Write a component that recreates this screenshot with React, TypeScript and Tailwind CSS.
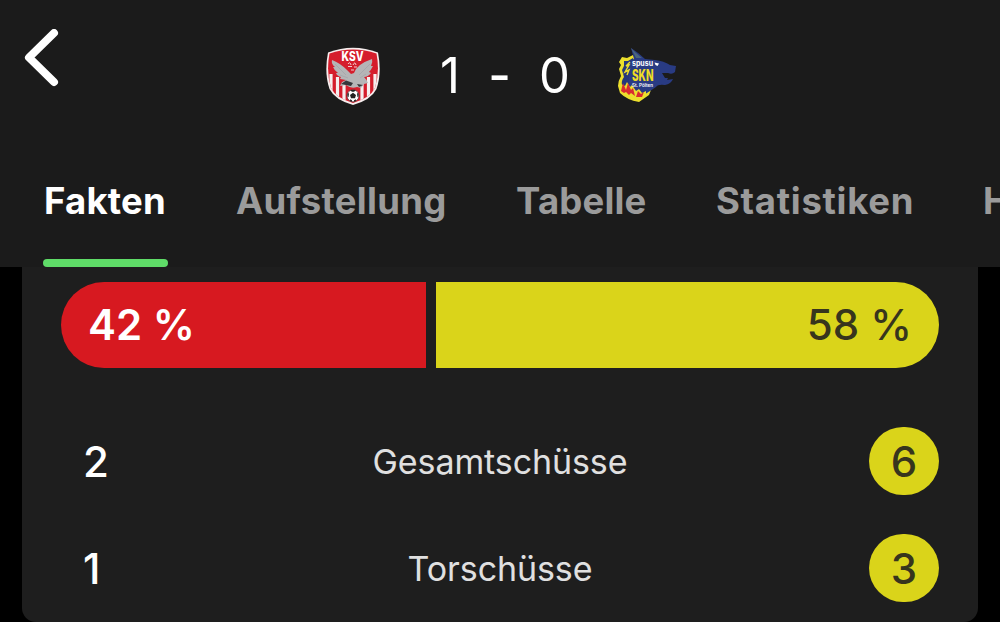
import clsx from 'clsx';

const tabs = [
  { label: 'Fakten', className: 'w-[125px] text-white tracking-[0.2px]', active: true },
  { label: 'Aufstellung', className: 'w-[213px] text-[#9b9b9b] tracking-[0.3px]' },
  { label: 'Tabelle', className: 'w-[133px] text-[#9b9b9b] tracking-[0.2px]' },
  { label: 'Statistiken', className: 'w-[200px] text-[#9b9b9b] tracking-[0.7px]' },
  { label: 'H2H', className: 'w-[80px] text-[#9b9b9b]' },
];

const stats = [
  { label: 'Gesamtschüsse', home: 2, away: 6 },
  { label: 'Torschüsse', home: 1, away: 3 },
];

const HomeCrest = () => (
  <svg width="54" height="58" viewBox="0 0 54 58" className="shrink-0">
    <defs>
      <clipPath id="home-shield">
        <path d="M3.500 6.500Q27-1.500 50.500 6.500Q54 25 49 41Q44 51 27 56Q10 51 5 41Q0 25 3.500 6.500Z" />
      </clipPath>
    </defs>
    <path d="M2 5.500Q27-4 52 5.500Q56 26 50.500 42Q45 53 27 58Q9 53 3.500 42Q-2 26 2 5.500Z" fill="#f7eeee" />
    <g clipPath="url(#home-shield)">
      <rect width="54" height="58" fill="#d51d2c" />
      <path d="M5 27V50M11.500 30V54M18 36V58M36 36V58M42.500 30V54M49 27V50" stroke="#f5eeee" strokeWidth="3.2" />
    </g>
    <path
      d="M6 13Q14 16 21 23L25 27L28 26Q31 17 46 12Q47 15 45 19L47 19Q45 23 43 25L45 26Q42 30 38 30Q41 33 42 36L38 37L35 41L31 40Q25 42 20 38L14 39L16 35L20 33L14 32L15 30Q11 29 10 26L12 26Q8 23 7 20L9 20Q5 17 6 13Z"
      fill="#b5b5b7"
    />
    <path d="M9 17L20 28M14 28L22 31M44 17L33 28M40 27L34 31" stroke="#a0a0a4" strokeWidth="0.6" />
    <path d="M15 37L20 33.500L27 36L25 39L20 38ZM31 37L37 38L33 40Z" fill="#36363b" />
    <path d="M22 17Q24 14 25 18M27 18Q29 14 30 18M22 19.500H26M28 20H31M25 23H28" stroke="#f5dfe1" strokeWidth="0.9" fill="none" />
    <text x="26.5" y="13.7" textAnchor="middle" textLength="22" lengthAdjust="spacingAndGlyphs" fontSize="12.5" fontWeight="800" fill="#fff">
      KSV
    </text>
    <circle cx="27" cy="48.8" r="6" fill="#fff" stroke="#35252a" strokeWidth="0.6" />
    <path
      d="M27 45.800L30 48L29 51.300H25L24 48ZM24 43.300L27 42.800L30 43.300L28 44.800H26ZM21.500 46.300L23 46.300L22.500 50.300L21.300 49.300ZM32.500 46.300L31 46.300L31.500 50.300L32.700 49.300ZM24 52.300L26 53.300V54.700L24 53.800ZM30 52.300L28 53.300V54.700L30 53.800Z"
      fill="#222"
    />
  </svg>
);

const AwayCrest = () => (
  <svg width="60" height="58" viewBox="0 0 60 58" className="shrink-0">
    {/* shield */}
    <path d="M5 10L10 11L16 8L19 10L17 20V49L34 43L32 48L22 55Q10 53 3 46L1 39Q1 34 4 29L2 22L4 18L2 15Z" fill="#ecdf2d" />
    <path d="M7 14L11 14L16 11L18 20L18 45L5 38Q4 34 7 30L5 23L7 19Z" fill="#25377b" />
    {/* wolf head */}
    <path
      d="M14 1Q22 6 28 12L38 13Q47 14 53 18L59 19L58 25Q55 28 51 26L45 26L48 31L51 31L50 33L56 32Q54 37 48 38Q41 37 39 40L33 44L22 51L12 45V14L17 12Z"
      fill="#293b83"
    />
    <path d="M14 1L19 6L25 11L19 11Z" fill="#4b657c" />
    <path d="M13 15L9 19L12 18L8 25L12 23L10 28" stroke="#ecdf2d" strokeWidth="1.4" fill="none" />
    {/* flames */}
    <path d="M4 45L4 37L8 39L10 35L13 40L15 38L19 44L22 42L25 46L29 44L29 48L22 52Q12 51 4 45Z" fill="#ecdf2d" />
    <path d="M4 44L6 36L9 43L11 36L14 43L16 41L18 49L14 46L12 48L9 45L7 46ZM19 50L21 44L24 47L27 45L25 50Z" fill="#d92b30" />
    <path d="M37.500 15.500L42 16.500L40.500 19L38.500 18Z" fill="#fff" />
    <text x="15" y="18.500" textLength="21" lengthAdjust="spacingAndGlyphs" fontSize="7.500" fontWeight="700" fill="#fff">
      spusu
    </text>
    <text x="15" y="34" textLength="21.500" lengthAdjust="spacingAndGlyphs" fontSize="16" fontWeight="800" fill="#efdd25">
      SKN
    </text>
    <text x="15" y="40.300" textLength="21" lengthAdjust="spacingAndGlyphs" fontSize="4.800" fontWeight="600" fill="#fff">
      St. Pölten
    </text>
  </svg>
);

const Header = () => (
  <header className="flex h-[267px] shrink-0 flex-col bg-[#1b1b1b]">
    <div className="flex h-[155px] items-start">
      <button aria-label="Zurück" className="mt-[29px] ml-[24px] w-[36px] shrink-0">
        <svg width="36" height="58" viewBox="0 0 36 58" fill="none">
          <path d="M30 4L5 28.500L30 53" stroke="#fff" strokeWidth="8" strokeLinecap="round" strokeLinejoin="round" />
        </svg>
      </button>
      <div className="mt-[47px] ml-[266px] flex">
        <HomeCrest />
        <div className="ml-[60px] flex w-[130px] justify-between text-[49px] leading-[58px]">
          <span>1</span>
          <span className="font-medium">-</span>
          <span>0</span>
        </div>
        <div className="ml-[47px]">
          <AwayCrest />
        </div>
      </div>
    </div>
    <nav className="flex h-[112px] gap-[67px] overflow-hidden pl-[43px]">
      {tabs.map(tab => (
        <div key={tab.label} className={clsx('flex shrink-0 flex-col justify-between text-[36.5px] font-bold', tab.className)}>
          <span className="pt-[19px] pl-px leading-[54px] whitespace-nowrap">{tab.label}</span>
          {tab.active && <div className="h-2 rounded-full bg-[#5fdc68]" />}
        </div>
      ))}
    </nav>
  </header>
);

const Possession = () => (
  <div className="flex h-[86px] gap-[10px] text-[42px] leading-[86px]">
    <div className="w-[365px] rounded-l-full bg-[#d71920] pl-[27px] font-semibold">42 %</div>
    <div className="flex-1 rounded-r-full bg-[#dad41a] pr-[27px] text-right font-medium text-[#37351d]">58 %</div>
  </div>
);

export default function App() {
  return (
    <div className="flex h-[622px] w-[1000px] flex-col overflow-hidden bg-black font-['Inter',sans-serif] text-white">
      <Header />
      <main className="mx-[22px] h-[355px] rounded-b-[14px] bg-[#1e1e1e] px-[39px] pt-[15px]">
        <Possession />
        <div className="flex flex-col gap-[39px] pt-[59px]">
          {stats.map(stat => (
            <div key={stat.label} className="flex h-[68px] items-center justify-between text-[42px] font-medium">
              <span className="w-[70px] pl-[22px]">{stat.home}</span>
              <span className="text-[34px] font-normal tracking-[-0.1px] text-[#e0e0e0]">{stat.label}</span>
              <span className="flex h-[68px] w-[70px] items-center justify-center rounded-full bg-[#dad41a] text-[#37351d]">
                {stat.away}
              </span>
            </div>
          ))}
        </div>
      </main>
    </div>
  );
}
